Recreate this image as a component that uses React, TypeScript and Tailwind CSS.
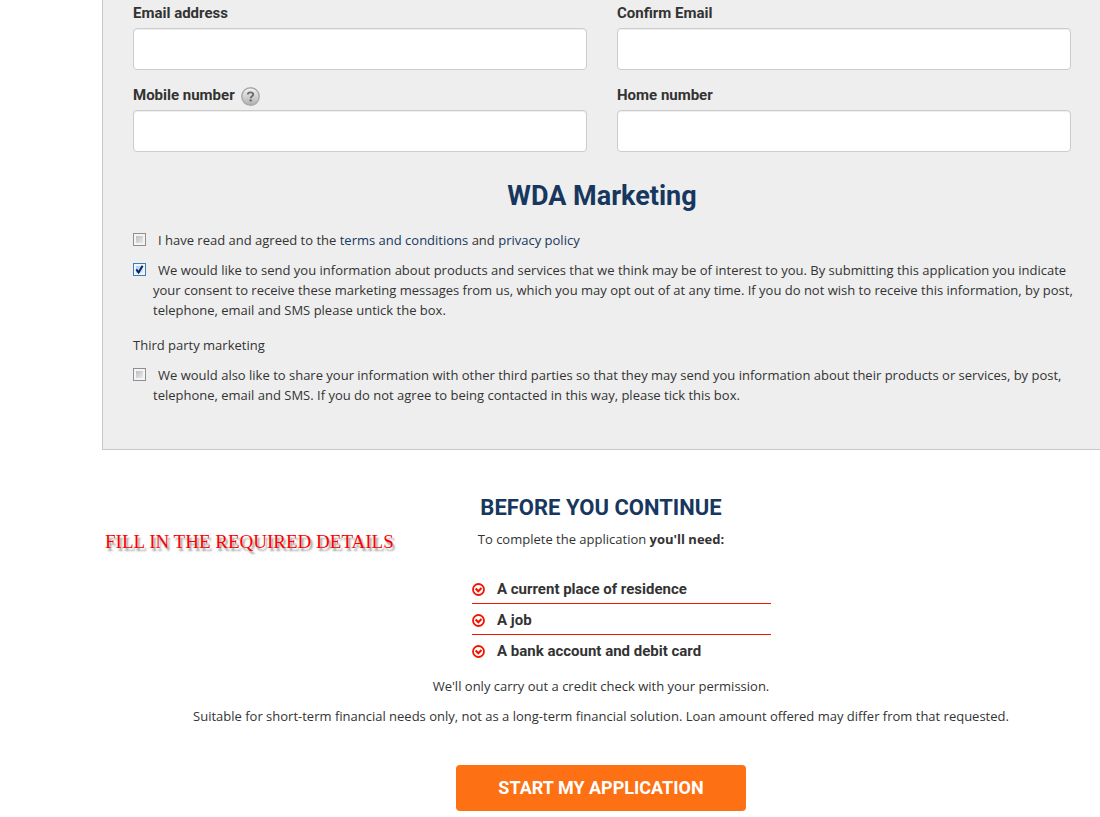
import { useState, type ReactNode } from 'react'

const NEEDS = ['A current place of residence', 'A job', 'A bank account and debit card']

function Field({ id, label, type, help }: { id: string; label: string; type: string; help?: boolean }) {
  return (
    <div>
      <div className="mb-[5px] flex h-5 items-center gap-[6px]">
        <label htmlFor={id} className="font-['Roboto',sans-serif] text-[15px] font-bold">{label}</label>
        {help && (
          <button type="button" aria-label={`Help with ${label}`} className="mt-[3px]">
            <HelpIcon />
          </button>
        )}
      </div>
      <input
        id={id}
        type={type}
        className="block h-[42px] w-full rounded border border-[#ccc] bg-white px-3 text-sm shadow-[inset_0_1px_1px_rgba(0,0,0,0.075)]"
      />
    </div>
  )
}

function HelpIcon() {
  return (
    <svg width="19" height="19" viewBox="0 0 19 19">
      <defs>
        <linearGradient id="helpFill" x1="0" y1="0" x2="0" y2="1">
          <stop offset="0" stopColor="#f4f4f4" />
          <stop offset="1" stopColor="#b0b0b0" />
        </linearGradient>
      </defs>
      <circle cx="9.5" cy="9.5" r="8.7" fill="url(#helpFill)" stroke="#a9a9a9" strokeWidth="1.4" />
      <path d="M6.8 7.4C6.8 6 7.9 5.4 9.5 5.4s2.7.7 2.7 2.1c0 1.7-2.5 1.7-2.5 3.7" fill="none" stroke="#6b6b6b" strokeWidth="1.9" />
      <circle cx="9.7" cy="13.4" r="1.2" fill="#6b6b6b" />
    </svg>
  )
}

function TickBullet() {
  return (
    <svg width="13" height="13" viewBox="0 0 13 13" fill="none" stroke="#f01500" className="shrink-0">
      <circle cx="6.5" cy="6.5" r="5.5" strokeWidth="1.8" />
      <path d="M3.6 5.6l2.7 2.7 3.2-3.2" strokeWidth="2.1" />
    </svg>
  )
}

function Check({ id, initial = false, children }: { id: string; initial?: boolean; children: ReactNode }) {
  const [on, setOn] = useState(initial)

  return (
    <div className="-mr-2 mb-2.5 flex items-start gap-[7px]">
      <span className="relative mt-[3px] size-[13px] shrink-0">
        <input
          id={id}
          type="checkbox"
          checked={on}
          onChange={(e) => setOn(e.target.checked)}
          className="block size-[13px] appearance-none border border-[#8e8f8f] bg-linear-to-br from-[#aeb3b9] to-[#f6f6f6] shadow-[inset_0_0_0_2px_#f4f4f4] checked:border-[#3c7fb1] checked:from-[#8fcdf0] checked:to-[#e9f6fd]"
        />
        {on && (
          <svg viewBox="0 0 13 13" className="pointer-events-none absolute inset-0 size-[13px]">
            <path d="M3.3 6.3l2.3 3.2 4-6.8" fill="none" stroke="#0f1f6b" strokeWidth="2" />
          </svg>
        )}
      </span>
      <label htmlFor={id} className="indent-[5px]">{children}</label>
    </div>
  )
}

export default function App() {
  return (
    <div className="relative ml-[102px] font-['Open_Sans',sans-serif] text-[13px] leading-5 text-[#333]">
      <section className="border-b border-l border-[#c8c8c8] bg-[#eee] pt-[3px] pr-[29px] pb-[34px] pl-[30px]">
        <div className="grid grid-cols-2 gap-x-[30px] gap-y-[15px]">
          <Field id="email" label="Email address" type="email" />
          <Field id="confirm-email" label="Confirm Email" type="email" />
          <Field id="mobile" label="Mobile number" type="tel" help />
          <Field id="home" label="Home number" type="tel" />
        </div>

        <h2 className="mt-7 mb-[18px] text-center font-['Roboto',sans-serif] text-[27px] leading-8 font-bold text-[#17375e]">
          WDA Marketing
        </h2>

        <Check id="terms">
          I have read and agreed to the <a href="#terms" className="text-[#17375e]">terms and conditions</a> and{' '}
          <a href="#privacy" className="text-[#17375e]">privacy policy</a>
        </Check>
        <Check id="own-marketing" initial>
          We would like to send you information about products and services that we think may be of interest to you. By
          submitting this application you indicate your consent to receive these marketing messages from us, which you
          may opt out of at any time. If you do not wish to receive this information, by post, telephone, email and SMS
          please untick the box.
        </Check>
        <p className="mt-[15px] mb-2.5">Third party marketing</p>
        <Check id="third-party">
          We would also like to share your information with other third parties so that they may send you information
          about their products or services, by post, telephone, email and SMS. If you do not agree to being contacted in
          this way, please tick this box.
        </Check>
      </section>

      <section className="flex flex-col items-center pt-[42px] text-center">
        <h3 className="mb-[5px] font-['Roboto',sans-serif] text-[22px] leading-8 font-bold text-[#17375e]">
          BEFORE YOU CONTINUE
        </h3>
        <p>
          To complete the application <b>you'll need:</b>
        </p>

        <ul className="mt-6 w-[340px] pl-[41px] text-left font-['Roboto',sans-serif] text-[15px] font-bold">
          {NEEDS.map((need) => (
            <li key={need} className="flex items-center gap-3 border-b border-[#f01500] pt-1.5 pb-1 last:border-b-0">
              <TickBullet />
              {need}
            </li>
          ))}
        </ul>

        <p className="mt-[11px]">We'll only carry out a credit check with your permission.</p>
        <p className="mt-2.5">
          Suitable for short-term financial needs only, not as a long-term financial solution. Loan amount offered may
          differ from that requested.
        </p>

        <button
          type="button"
          className="mt-[39px] mb-1.5 h-[46px] w-[290px] rounded bg-[#fd7013] font-['Roboto',sans-serif] text-lg font-bold text-white"
        >
          START MY APPLICATION
        </button>
      </section>

      {/* Callout pinned over the page */}
      <p className="absolute top-[532px] left-[3px] font-['Liberation_Serif',serif] text-[19px] text-[#f00] [text-shadow:2px_3px_2px_rgba(0,0,0,0.4)]">
        FILL IN THE REQUIRED DETAILS
      </p>
    </div>
  )
}
